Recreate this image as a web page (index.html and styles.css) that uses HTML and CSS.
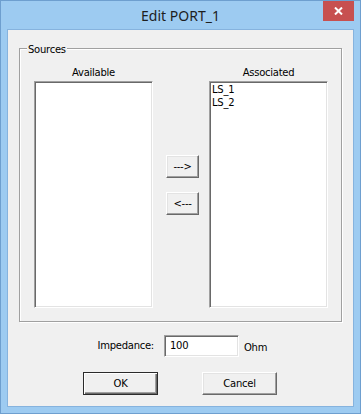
FILE: index.html
```html
<!DOCTYPE html>
<html>
<head>
<meta charset="utf-8">
<link rel="stylesheet" href="styles.css">
</head>
<body>
<div class="window">
  <div class="titlebar">
    <span class="title">Edit PORT_1</span>
    <div class="close">
      <svg width="9" height="8" viewBox="0 0 9 8"><path d="M1 0.5 L8 7.5 M8 0.5 L1 7.5" stroke="#fff" stroke-width="2" fill="none"/></svg>
    </div>
  </div>
  <div class="client">
    <div class="group">
      <span class="legend">Sources</span>
      <div class="cols">
        <div class="col">
          <div class="label">Available</div>
          <div class="list"></div>
        </div>
        <div class="mid">
          <button class="btn move">---&gt;</button>
          <button class="btn move">&lt;---</button>
        </div>
        <div class="col">
          <div class="label">Associated</div>
          <div class="list">
            <div class="item">LS_1</div>
            <div class="item">LS_2</div>
          </div>
        </div>
      </div>
    </div>
    <div class="imp-row">
      <span class="imp-label">Impedance:</span>
      <div class="input">100</div>
      <span class="unit">Ohm</span>
    </div>
    <div class="actions">
      <button class="btn action default">OK</button>
      <button class="btn action cancel">Cancel</button>
    </div>
  </div>
</div>
</body>
</html>
```
FILE: styles.css
```css
html, body {
  margin: 0;
  padding: 0;
  overflow: hidden;
}
.window {
  position: relative;
  width: 361px;
  height: 414px;
  box-sizing: border-box;
  border: 1px solid #6e9fcf;
  background: #9dcbf1;
  display: flex;
  flex-direction: column;
  font-family: "DejaVu Sans", sans-serif;
  font-size: 10px;
  letter-spacing: -0.25px;
  color: #000;
}
.titlebar {
  height: 28px;
  flex: none;
  display: flex;
  align-items: center;
  justify-content: center;
}
.title {
  font-family: "Noto Sans", "Open Sans", sans-serif;
  font-size: 14px;
  line-height: 19px;
  letter-spacing: 0;
  color: #1e1e1e;
}
.close {
  position: absolute;
  top: 0;
  right: 6px;
  width: 31px;
  height: 20px;
  background: #c75050;
  display: flex;
  align-items: center;
  justify-content: center;
}
.close svg {
  display: block;
}
.client {
  margin: 0 6px;
  box-sizing: border-box;
  height: 378px;
  border: 1px solid #86b3de;
  background: #f0f0f0;
  padding: 18px 0 0 11px;
}
.group {
  position: relative;
  box-sizing: border-box;
  width: 323px;
  height: 274px;
  border: 1px solid #a0a0a0;
  box-shadow: inset 1px 1px 0 #fff, 1px 1px 0 #fff;
  padding: 17px 0 0 14px;
}
.legend {
  position: absolute;
  top: -6px;
  left: 7px;
  padding: 0 1px;
  line-height: 13px;
  background: #f0f0f0;
}
.cols {
  display: flex;
  align-items: flex-start;
}
.col {
  width: 119px;
  display: flex;
  flex-direction: column;
}
.col:first-child {
  margin-right: 13px;
}
.label {
  height: 13px;
  line-height: 13px;
  text-align: center;
  margin-bottom: 2px;
}
.list {
  box-sizing: border-box;
  height: 227px;
  background: #fff;
  border: 1px solid;
  border-color: #a0a0a0 #fff #fff #a0a0a0;
  box-shadow: inset 1px 1px 0 #696969, inset -1px -1px 0 #e3e3e3;
  padding: 1px 0 0 2px;
}
.item {
  line-height: 13px;
}
.mid {
  width: 33px;
  margin-right: 10px;
  padding-top: 89px;
  display: flex;
  flex-direction: column;
  gap: 14px;
}
.btn {
  box-sizing: border-box;
  margin: 0;
  padding: 0;
  font: inherit;
  letter-spacing: inherit;
  color: #000;
  background: #f0f0f0;
  border: 1px solid;
  border-color: #fff #696969 #696969 #fff;
  box-shadow: inset -1px -1px 0 #a0a0a0, inset 1px 1px 0 #e3e3e3;
  display: flex;
  align-items: center;
  justify-content: center;
  line-height: 13px;
}
.move {
  width: 33px;
  height: 23px;
}
.imp-row {
  margin-top: 13px;
  height: 22px;
  display: flex;
  align-items: flex-start;
}
.imp-label {
  width: 135px;
  margin-right: 10px;
  text-align: right;
  line-height: 22px;
}
.input {
  box-sizing: border-box;
  width: 75px;
  height: 22px;
  background: #fff;
  border: 1px solid;
  border-color: #a0a0a0 #fff #fff #a0a0a0;
  box-shadow: inset 1px 1px 0 #696969, inset -1px -1px 0 #e3e3e3;
  padding-left: 5px;
  line-height: 20px;
}
.unit {
  margin-left: 5px;
  padding-top: 2px;
  line-height: 22px;
}
.actions {
  margin-top: 15px;
  display: flex;
  padding-left: 64px;
  gap: 44px;
}
.action {
  width: 75px;
  height: 23px;
  padding-bottom: 1px;
}
.default {
  border-color: #2b2b2b;
  box-shadow: inset 1px 1px 0 #fff, inset -1px -1px 0 #696969, inset -2px -2px 0 #a0a0a0;
}
```
